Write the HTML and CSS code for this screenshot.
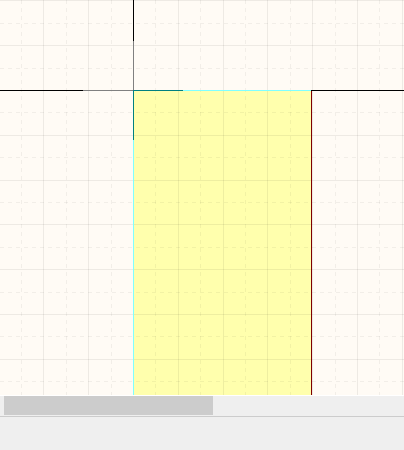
FILE: index.html
```html
<!DOCTYPE html>
<html>
<head>
<meta charset="utf-8">
<link rel="stylesheet" href="styles.css">
</head>
<body>
<div class="editor">
  <div class="canvas">
    <svg class="drawing" width="404" height="395" viewBox="0 0 404 395" xmlns="http://www.w3.org/2000/svg">
      <rect x="0" y="0" width="404" height="395" fill="#fffbf5"/>
      <rect x="133" y="90" width="179" height="305" fill="#ffffad"/>
      <g class="grid-dash" stroke="rgba(0,0,0,0.05)" stroke-width="1" stroke-dasharray="4 4">
        <line x1="21.5" y1="0" x2="21.5" y2="395"/>
        <line x1="66.5" y1="0" x2="66.5" y2="395"/>
        <line x1="111.5" y1="0" x2="111.5" y2="395"/>
        <line x1="155.5" y1="0" x2="155.5" y2="395"/>
        <line x1="200.5" y1="0" x2="200.5" y2="395"/>
        <line x1="245.5" y1="0" x2="245.5" y2="395"/>
        <line x1="290.5" y1="0" x2="290.5" y2="395"/>
        <line x1="335.5" y1="0" x2="335.5" y2="395"/>
        <line x1="379.5" y1="0" x2="379.5" y2="395"/>
        <line x1="0" y1="23.5" x2="404" y2="23.5"/>
        <line x1="0" y1="68.5" x2="404" y2="68.5"/>
        <line x1="0" y1="112.5" x2="404" y2="112.5"/>
        <line x1="0" y1="157.5" x2="404" y2="157.5"/>
        <line x1="0" y1="202.5" x2="404" y2="202.5"/>
        <line x1="0" y1="247.5" x2="404" y2="247.5"/>
        <line x1="0" y1="292.5" x2="404" y2="292.5"/>
        <line x1="0" y1="336.5" x2="404" y2="336.5"/>
        <line x1="0" y1="381.5" x2="404" y2="381.5"/>
      </g>
      <g class="grid-solid" stroke="rgba(0,0,0,0.065)" stroke-width="1">
        <line x1="43.5" y1="0" x2="43.5" y2="395"/>
        <line x1="88.5" y1="0" x2="88.5" y2="395"/>
        <line x1="178.5" y1="0" x2="178.5" y2="395"/>
        <line x1="223.5" y1="0" x2="223.5" y2="395"/>
        <line x1="267.5" y1="0" x2="267.5" y2="395"/>
        <line x1="312.5" y1="0" x2="312.5" y2="395"/>
        <line x1="357.5" y1="0" x2="357.5" y2="395"/>
        <line x1="402.5" y1="0" x2="402.5" y2="395"/>
        <line x1="0" y1="0.5" x2="404" y2="0.5"/>
        <line x1="0" y1="45.5" x2="404" y2="45.5"/>
        <line x1="0" y1="135.5" x2="404" y2="135.5"/>
        <line x1="0" y1="180.5" x2="404" y2="180.5"/>
        <line x1="0" y1="224.5" x2="404" y2="224.5"/>
        <line x1="0" y1="269.5" x2="404" y2="269.5"/>
        <line x1="0" y1="314.5" x2="404" y2="314.5"/>
        <line x1="0" y1="359.5" x2="404" y2="359.5"/>
      </g>
      <g stroke-width="1" fill="none">
        <line x1="133.5" y1="0" x2="133.5" y2="41" stroke="#000"/>
        <line x1="133.5" y1="41" x2="133.5" y2="90" stroke="#808080"/>
        <line x1="0" y1="90.5" x2="83" y2="90.5" stroke="#000"/>
        <line x1="83" y1="90.5" x2="133" y2="90.5" stroke="#808080"/>
        <line x1="133" y1="90.5" x2="183" y2="90.5" stroke="#008080"/>
        <line x1="183" y1="90.5" x2="311" y2="90.5" stroke="#80ffff"/>
        <line x1="133.5" y1="90" x2="133.5" y2="140" stroke="#008080"/>
        <line x1="133.5" y1="140" x2="133.5" y2="395" stroke="#80ffff"/>
        <line x1="311.5" y1="90" x2="311.5" y2="395" stroke="#800000"/>
        <line x1="311" y1="90.5" x2="404" y2="90.5" stroke="#000"/>
      </g>
    </svg>
  </div>
  <div class="hscroll">
    <div class="hscroll-thumb"></div>
  </div>
  <div class="statusbar"></div>
</div>
</body>
</html>
```

FILE: styles.css
```css
html, body {
  margin: 0;
  padding: 0;
  background: #efefef;
  font-family: "Liberation Sans", Arial, sans-serif;
}

.editor {
  width: 404px;
  height: 450px;
  display: flex;
  flex-direction: column;
  overflow: hidden;
}

.canvas {
  height: 395px;
  flex: 0 0 395px;
  overflow: hidden;
  border-bottom: 1px solid #ffffff;
}

.drawing {
  display: block;
}

.hscroll {
  flex: 0 0 20px;
  height: 20px;
  background: #efefef;
  padding-left: 4px;
  border-bottom: 1px solid #cccccc;
}

.hscroll-thumb {
  width: 209px;
  height: 19px;
  background: #cccccc;
}

.statusbar {
  flex: 1 1 auto;
  background: #efefef;
}
```
